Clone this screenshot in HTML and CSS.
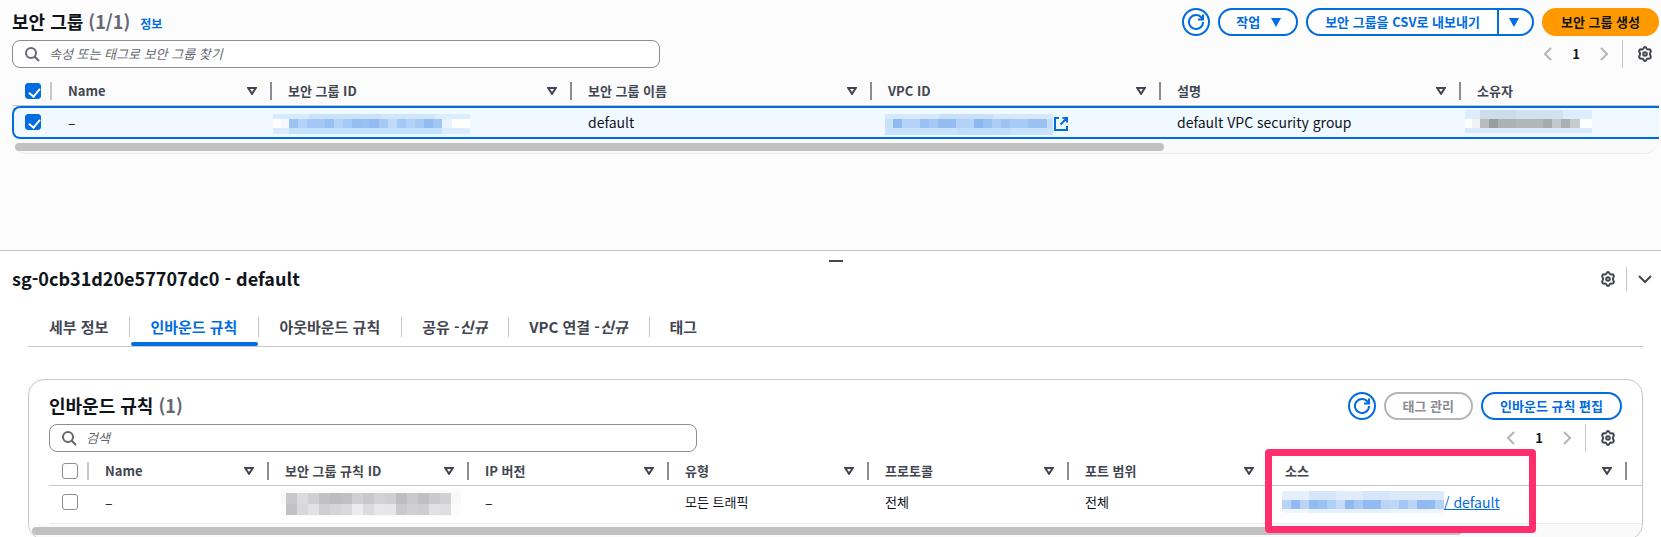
FILE: index.html
```html
<!DOCTYPE html>
<html lang="ko">
<head>
<meta charset="utf-8">
<title>보안 그룹</title>
<link rel="stylesheet" href="styles.css">
</head>
<body>
<svg class="sprite" aria-hidden="true">
  <symbol id="i-search" viewBox="0 0 16 16"><circle cx="7" cy="7" r="5"/><path d="M10.8 10.8 15 15"/></symbol>
  <symbol id="i-refresh" viewBox="0 0 16 16"><path d="M15 8a7 7 0 1 1-1.4-4.2L15 5.5"/><path d="M15 .5v5h-5"/></symbol>
  <symbol id="i-prev" viewBox="0 0 16 16"><path d="M11 2 5 8l6 6"/></symbol>
  <symbol id="i-next" viewBox="0 0 16 16"><path d="m5 2 6 6-6 6"/></symbol>
  <symbol id="i-down" viewBox="0 0 16 16"><path d="m2 5 6 6 6-6"/></symbol>
  <symbol id="i-gear" viewBox="0 0 16 16"><path d="M8 1C9 1 9.200 1.600 9.500 2.400 9.800 3.100 10.400 3.500 11.200 3.400 12.300 3.200 13 3.200 13.600 4.200 14.200 5.300 13.900 5.800 13.300 6.500 12.700 7.400 12.700 8.600 13.300 9.500 13.900 10.200 14.200 10.700 13.600 11.800 13 12.800 12.300 12.800 11.200 12.600 10.400 12.500 9.800 12.900 9.500 13.600 9.200 14.400 9 15 8 15 7 15 6.800 14.400 6.500 13.600 6.200 12.900 5.600 12.500 4.800 12.600 3.700 12.800 3 12.800 2.400 11.800 1.800 10.700 2.100 10.200 2.700 9.500 3.300 8.600 3.300 7.400 2.700 6.500 2.100 5.800 1.800 5.300 2.400 4.200 3 3.200 3.700 3.200 4.800 3.400 5.600 3.500 6.200 3.100 6.500 2.400 6.800 1.600 7 1 8 1z"/><circle cx="8" cy="8" r="1.800"/></symbol>
  <symbol id="i-ext" viewBox="0 0 16 16"><path d="M6 2H2v12h12v-4M9.500 2H14v4.500M14 2 7.500 8.500"/></symbol>
  <symbol id="i-sort" viewBox="0 0 10 8"><path d="M1.200 1h7.600L5 6.800z"/></symbol>
  <symbol id="i-caret" viewBox="0 0 10 9"><path d="M0 0h10L5 9z"/></symbol>
</svg>

<main class="list">
  <header class="bar">
    <h1 class="title">보안 그룹 <span class="count">(1/1)</span></h1>
    <a class="info" href="#">정보</a>
    <div class="actions">
      <button class="btn round" type="button" aria-label="새로 고침"><svg class="icon"><use href="#i-refresh"/></svg></button>
      <button class="btn menu" type="button">작업 <svg class="caret"><use href="#i-caret"/></svg></button>
      <div class="split">
        <button class="btn" type="button">보안 그룹을 CSV로 내보내기</button>
        <button class="btn" type="button" aria-label="내보내기 옵션"><svg class="caret"><use href="#i-caret"/></svg></button>
      </div>
      <button class="btn primary" type="button">보안 그룹 생성</button>
    </div>
  </header>
  <div class="tools">
    <label class="search"><svg class="icon"><use href="#i-search"/></svg><input type="search" aria-label="보안 그룹 찾기" placeholder="속성 또는 태그로 보안 그룹 찾기"></label>
    <nav class="pager" aria-label="페이지">
      <button class="plain muted" type="button" aria-label="이전"><svg class="icon"><use href="#i-prev"/></svg></button>
      <b>1</b>
      <button class="plain muted" type="button" aria-label="다음"><svg class="icon"><use href="#i-next"/></svg></button>
      <button class="plain gear" type="button" aria-label="설정"><svg class="icon"><use href="#i-gear"/></svg></button>
    </nav>
  </div>
  <table class="grid groups">
    <colgroup><col class="c40"><col class="c220"><col class="c300"><col class="c300"><col class="c289"><col class="c300"><col></colgroup>
    <thead><tr>
      <th class="pick"><input type="checkbox" aria-label="모두 선택" checked></th>
      <th><div class="head">Name<svg class="sort"><use href="#i-sort"/></svg></div></th>
      <th><div class="head">보안 그룹 ID<svg class="sort"><use href="#i-sort"/></svg></div></th>
      <th><div class="head">보안 그룹 이름<svg class="sort"><use href="#i-sort"/></svg></div></th>
      <th><div class="head">VPC ID<svg class="sort"><use href="#i-sort"/></svg></div></th>
      <th><div class="head">설명<svg class="sort"><use href="#i-sort"/></svg></div></th>
      <th class="last"><div class="head">소유자</div></th>
    </tr></thead>
    <tbody><tr>
      <td class="pick"><input type="checkbox" aria-label="default 선택" checked></td>
      <td class="latin">–</td>
      <td class="masked"><svg class="mosaic" data-mosaic="groupId"></svg></td>
      <td class="latin">default</td>
      <td class="masked"><div class="line"><svg class="mosaic" data-mosaic="vpcId"></svg><a href="#" aria-label="새 탭에서 열기"><svg class="icon"><use href="#i-ext"/></svg></a></div></td>
      <td class="latin">default VPC security group</td>
      <td class="masked owner"><svg class="mosaic" data-mosaic="owner"></svg></td>
    </tr></tbody>
  </table>
  <div class="track"><div class="thumb"></div></div>
</main>

<section class="panel">
  <div class="handle"><span class="grip"></span></div>
  <header class="panel-head">
    <h2 class="title">sg-0cb31d20e57707dc0 - default</h2>
    <div class="panel-tools">
      <button class="plain" type="button" aria-label="패널 설정"><svg class="icon"><use href="#i-gear"/></svg></button>
      <button class="plain fold" type="button" aria-label="패널 닫기"><svg class="icon"><use href="#i-down"/></svg></button>
    </div>
  </header>
  <div class="content">
    <div class="tabs" role="tablist">
      <button class="tab" role="tab" type="button">세부 정보</button>
      <button class="tab active" role="tab" type="button" aria-selected="true">인바운드 규칙</button>
      <button class="tab" role="tab" type="button">아웃바운드 규칙</button>
      <button class="tab" role="tab" type="button">공유 -<i>신규</i></button>
      <button class="tab" role="tab" type="button">VPC 연결 -<i>신규</i></button>
      <button class="tab" role="tab" type="button">태그</button>
    </div>
    <div class="card">
      <div class="card-body">
        <header class="bar">
          <h3 class="title">인바운드 규칙 <span class="count">(1)</span></h3>
          <div class="actions">
            <button class="btn round" type="button" aria-label="새로 고침"><svg class="icon"><use href="#i-refresh"/></svg></button>
            <button class="btn" type="button" disabled>태그 관리</button>
            <button class="btn" type="button">인바운드 규칙 편집</button>
          </div>
        </header>
        <div class="tools">
          <label class="search"><svg class="icon"><use href="#i-search"/></svg><input type="search" aria-label="규칙 검색" placeholder="검색"></label>
          <nav class="pager" aria-label="페이지">
            <button class="plain muted" type="button" aria-label="이전"><svg class="icon"><use href="#i-prev"/></svg></button>
            <b>1</b>
            <button class="plain muted" type="button" aria-label="다음"><svg class="icon"><use href="#i-next"/></svg></button>
            <button class="plain gear" type="button" aria-label="설정"><svg class="icon"><use href="#i-gear"/></svg></button>
          </nav>
        </div>
      </div>
      <table class="grid rules">
        <colgroup><col class="c40"><col class="c180"><col class="c200"><col class="c200"><col class="c200"><col class="c200"><col class="c200"><col><col class="c15"></colgroup>
        <thead><tr>
          <th class="pick"><input type="checkbox" aria-label="모두 선택"></th>
          <th><div class="head">Name<svg class="sort"><use href="#i-sort"/></svg></div></th>
          <th><div class="head">보안 그룹 규칙 ID<svg class="sort"><use href="#i-sort"/></svg></div></th>
          <th><div class="head">IP 버전<svg class="sort"><use href="#i-sort"/></svg></div></th>
          <th><div class="head">유형<svg class="sort"><use href="#i-sort"/></svg></div></th>
          <th><div class="head">프로토콜<svg class="sort"><use href="#i-sort"/></svg></div></th>
          <th><div class="head">포트 범위<svg class="sort"><use href="#i-sort"/></svg></div></th>
          <th class="source"><div class="head">소스<svg class="sort"><use href="#i-sort"/></svg></div><div class="highlight"></div></th>
          <th class="last"></th>
        </tr></thead>
        <tbody><tr>
          <td class="pick"><input type="checkbox" aria-label="규칙 선택"></td>
          <td class="latin">–</td>
          <td class="masked"><svg class="mosaic" data-mosaic="ruleId"></svg></td>
          <td class="latin">–</td>
          <td>모든 트래픽</td>
          <td>전체</td>
          <td>전체</td>
          <td class="masked latin"><div class="line"><svg class="mosaic" data-mosaic="source"></svg><a href="#">/ default</a></div></td>
          <td></td>
        </tr></tbody>
      </table>
      <div class="track"><div class="thumb"></div></div>
    </div>
  </div>
</section>
<script src="mosaic.js"></script>
</body>
</html>
```

FILE: styles.css
```css
* { box-sizing: border-box; }
body {
  margin: 0;
  height: 100vh;
  display: flex;
  flex-direction: column;
  overflow: hidden;
  background: #fcfcfd;
  color: #0f141a;
  font: 13px/20px "Noto Sans CJK KR", "Noto Sans", sans-serif;
}
button, input { font: inherit; color: inherit; }
button { cursor: pointer; }
a { color: #006ce0; }
svg { display: block; }
.sprite { display: none; }
.icon { width: 16px; height: 16px; fill: none; stroke: currentColor; stroke-width: 2; flex: none; }
.caret { width: 10px; height: 9px; fill: currentColor; }

.list { flex: 1; min-height: 0; padding: 8px 2px 0 12px; }
.bar { display: flex; align-items: center; height: 28px; }
.title { margin: 0; padding-bottom: 2px; font-size: 18px; line-height: 22px; font-weight: 700; }
.count { color: #656871; }
.info { margin: 4px 0 0 10px; font-size: 12px; font-weight: 700; text-decoration: none; }
.actions { display: flex; gap: 8px; margin-left: auto; }
.btn {
  height: 28px;
  padding: 0 17px;
  display: flex;
  align-items: center;
  gap: 12px;
  border: 2px solid #006ce0;
  border-radius: 14px;
  background: #fff;
  color: #006ce0;
  font-weight: 700;
  white-space: nowrap;
}
.btn.menu { padding: 0 15px 0 16px; gap: 11px; }
.btn.round { width: 28px; padding: 0; justify-content: center; }
.btn.primary { border-color: #ff9900; background: #ff9900; color: #0f141a; }
.btn:disabled { border-color: #b4b4bb; color: #8c8c94; }
.split { display: flex; }
.split .btn:first-child { border-radius: 14px 0 0 14px; border-right: 0; }
.split .btn:last-child { border-radius: 0 14px 14px 0; padding: 0 13px 0 10px; }

.tools { display: flex; justify-content: space-between; margin-top: 4px; }
.search {
  display: flex;
  align-items: center;
  gap: 9px;
  width: 648px;
  height: 28px;
  padding: 0 11px;
  border: 1px solid #8c8c94;
  border-radius: 8px;
  background: #fff;
  color: #656871;
}
.search input { flex: 1; border: 0; padding: 0; outline: 0; background: none; }
.search input::placeholder { color: #656871; font-style: italic; opacity: 1; }
.pager { display: flex; align-items: center; gap: 16px; }
.plain { border: 0; padding: 0; background: none; color: #424650; }
.plain.muted { color: #b4b4bb; }
.pager .gear { height: 28px; padding: 0 6px 0 14px; border-left: 1px solid #c6c6cd; margin-left: -6px; }

.grid { width: 100%; table-layout: fixed; border-collapse: separate; border-spacing: 0; }
.grid th, .grid td { padding: 0 0 0 16px; text-align: left; white-space: nowrap; }
.grid th { position: relative; height: 38px; padding-top: 8px; border-bottom: 1px solid #c6c6cd; color: #424650; font-weight: 700; }
.grid .pick { padding-left: 13px; }
.grid td.masked { padding-left: 0; }
.grid .latin { font-size: 14px; }
.c15 { width: 15px; }
.c40 { width: 40px; }
.c180 { width: 180px; }
.c200 { width: 200px; }
.c220 { width: 220px; }
.c289 { width: 289px; }
.c300 { width: 300px; }
.head { display: flex; align-items: center; justify-content: space-between; height: 18px; padding-right: 13px; border-right: 2px solid #8c8c94; }
.last .head { border: 0; }
th.pick::after { content: ""; position: absolute; right: 0; bottom: 5px; width: 2px; height: 18px; background: #c6c6cd; }
.sort { width: 10px; height: 8px; fill: none; stroke: currentColor; stroke-width: 2; }
input[type="checkbox"] {
  appearance: none;
  display: block;
  width: 16px;
  height: 16px;
  margin: 0;
  border: 1px solid #8c8c94;
  border-radius: 3px;
  background: #fff;
}
input[type="checkbox"]:checked { border-color: #006ce0; background: #006ce0; }
input[type="checkbox"]:checked::after {
  content: "";
  display: block;
  width: 5px;
  height: 9px;
  margin: 2px 0 0 5px;
  border: solid #fff;
  border-width: 0 2px 2px 0;
  transform: rotate(40deg);
}
.line { display: flex; align-items: center; }
.groups td { height: 33px; padding-bottom: 2px; border-top: 2px solid #006ce0; border-bottom: 2px solid #006ce0; background: #f0f9ff; }
.groups td.pick { padding-left: 11px; border-left: 2px solid #006ce0; border-radius: 8px 0 0 8px; }
.groups td.masked { padding-top: 3px; padding-bottom: 0; }
.groups td.owner { padding-top: 0; padding-bottom: 2px; }
.track { height: 15px; padding: 4px 3px; border-bottom: 1px solid #ebebf0; border-radius: 0 0 16px 16px; background: #fafafa; }
.thumb { width: 70%; height: 8px; border-radius: 4px; background: #c1c1c1; }

.panel { flex: 0 0 287px; overflow: hidden; border-top: 1px solid #c6c6cd; background: #fff; }
.handle { display: flex; justify-content: center; padding: 9px 0 5px 11px; }
.grip { width: 14px; height: 2px; background: #424650; }
.panel-head { display: flex; align-items: center; justify-content: space-between; padding: 0 8px 0 12px; }
.panel-tools { display: flex; align-items: center; gap: 10px; }
.panel-tools .fold { padding: 4px 0 4px 10px; border-left: 1px solid #c6c6cd; }
.content { padding: 17px 18px 0 28px; }
.tabs { display: flex; align-items: flex-start; height: 39px; padding-left: 1px; border-bottom: 1px solid #c6c6cd; }
.tab { position: relative; height: 38px; padding: 0 22px 0 20px; border: 0; background: none; color: #424650; font-size: 15px; font-weight: 700; }
.tab:not(:last-child)::after { content: ""; position: absolute; right: 0; top: 9px; width: 1px; height: 20px; background: #c6c6cd; }
.tab.active { color: #006ce0; }
.tab.active::before { content: ""; position: absolute; left: 1px; right: 1px; bottom: 0; height: 4px; border-radius: 2px; background: #006ce0; }
.card { margin-top: 32px; overflow: hidden; border: 1px solid #c6c6cd; border-radius: 16px; background: #fff; }
.card-body { padding: 12px 20px 0; }
.rules { width: calc(100% - 20px); margin-left: 20px; }
.rules th { height: 34px; padding-top: 4px; }
.rules td { height: 38px; padding-bottom: 5px; border-bottom: 1px solid #ebebf0; }
.rules .source { z-index: 1; }
.highlight { position: absolute; top: -3px; left: -4px; width: 271px; height: 84px; border: 7px solid #ff2e6c; border-radius: 4px; }
.card .track { border: 0; padding-top: 3px; }
.card .thumb { width: 89%; }
```

FILE: mosaic.js
```js
// Pixelated covers for redacted values: each row is [height, [width, colour], ...].
const blues = ['#9cc2f4', '#b4d2f7', '#a4c8f5', '#a4c8f5', '#98c0f3', '#b5d3f8', '#a5c9f5', '#94bef2', '#98c0f3', '#91bbf1', '#a7caf5', '#c0daf9', '#a4c8f5', '#b3d2f7', '#a6caf5', '#91bbf1', '#a0c6f4'];
const strip = (colours, w) => colours.map(c => [w, c]);
const mosaics = {
  groupId: { x: 1, rows: [
    [5, [36, '#d7ebfc'], [72, '#cbe3fa'], [54, '#d0e7fb'], [35, '#dceefd']],
    [9, [8, '#ffffff'], [8, '#f4f9ff'], ...strip(blues, 9), [10, '#e8f3fe'], [18, '#ffffff']],
    [6, [16, '#d9ecfe'], [153, '#c3e0fc'], [28, '#dceefe']]] },
  vpcId: { x: 13, rows: [
    [5, [54, '#d4e9fb'], [54, '#c8e0f9'], [60, '#d5e9fb']],
    [9, [8, '#c9e2fa'], [9, '#8fbaf0'], [18, '#b4d3f7'], [9, '#98c0f2'], [9, '#a5c9f5'], [18, '#93bdf1'], [18, '#b3d2f7'], [9, '#8bb7f0'], [9, '#98c0f2'], [9, '#abcdf6'], [9, '#9cc3f3'], [18, '#a8cbf5'], [19, '#99c1f2'], [6, '#c5dffa']],
    [7, [72, '#c7e3fe'], [54, '#c0defc'], [42, '#c7e3fe']]] },
  owner: { x: 4, rows: [
    [9, [15, '#dceefe'], [36, '#cbdde9'], [47, '#d2e2ed'], [29, '#dceefe']],
    [9, [7, '#ffffff'], [8, '#f2f2f2'], [9, '#b8bcbc'], [9, '#999d9e'], [18, '#adb1b2'], [27, '#b2b6b7'], [9, '#a6aaab'], [9, '#c4c8ca'], [9, '#adb0b3'], [10, '#c8cbcc'], [12, '#ffffff']],
    [5, [127, '#d8eafb']]] },
  ruleId: { x: 12, rows: [
    [4, [180, '#fbfbfb']],
    [11, [5, '#f7f7f7'], ...strip(['#c8c8ca', '#dbdbdd', '#d0d0d2', '#c1c1c3', '#bcbcbe', '#c0c0c2', '#d0d0d2', '#c8c8ca', '#d2d2d4', '#cfcfd1', '#bebec0', '#c9c9cb', '#bfbfc1', '#cacacc', '#d1d1d3'], 11), [10, '#f8f8f8']],
    [11, [5, '#fbfbfb'], ...strip(['#c2c2c5', '#d8d8da', '#e2e2e2', '#cfcfd1', '#d5d5d8', '#dadadc', '#ebeceb', '#dcdcde', '#e6e7e6', '#e5e6e5', '#cacace', '#d0d0d3', '#cccdcf', '#e1e1e3', '#dddedd'], 11), [10, '#fcfcfc']],
    [1, [180, '#fbfbfb']]] },
  source: { x: 13, rows: [
    [9, [27, '#e6effc'], [27, '#d6e5fa'], [27, '#e0ebfb'], [27, '#d6e5fa'], [54, '#dce9fb']],
    [9, ...strip(['#b9d3f6', '#91bbf1', '#bad4f6', '#92bbf1', '#9bc1f3', '#b0cff6', '#c5daf8', '#8fb9f0', '#a7c9f4', '#90baf1', '#91bbf1', '#bad4f6', '#c0d8f7', '#a3c6f4', '#bad4f6', '#8fb9f0', '#91bbf1', '#b5d1f6'], 9)],
    [4, [27, '#f0f6fe'], [81, '#e6f0fd'], [54, '#edf4fd']]] }
};

for (const svg of document.querySelectorAll('[data-mosaic]')) {
  const { x: indent, rows } = mosaics[svg.dataset.mosaic];
  let y = 0, width = 0;
  for (const [height, ...cells] of rows) {
    let x = indent;
    for (const [w, fill] of cells) {
      const rect = document.createElementNS('http://www.w3.org/2000/svg', 'rect');
      for (const [k, v] of Object.entries({ x, y, width: w, height, fill })) rect.setAttribute(k, v);
      svg.append(rect);
      x += w;
    }
    width = Math.max(width, x);
    y += height;
  }
  svg.setAttribute('width', width);
  svg.setAttribute('height', y);
}
```
